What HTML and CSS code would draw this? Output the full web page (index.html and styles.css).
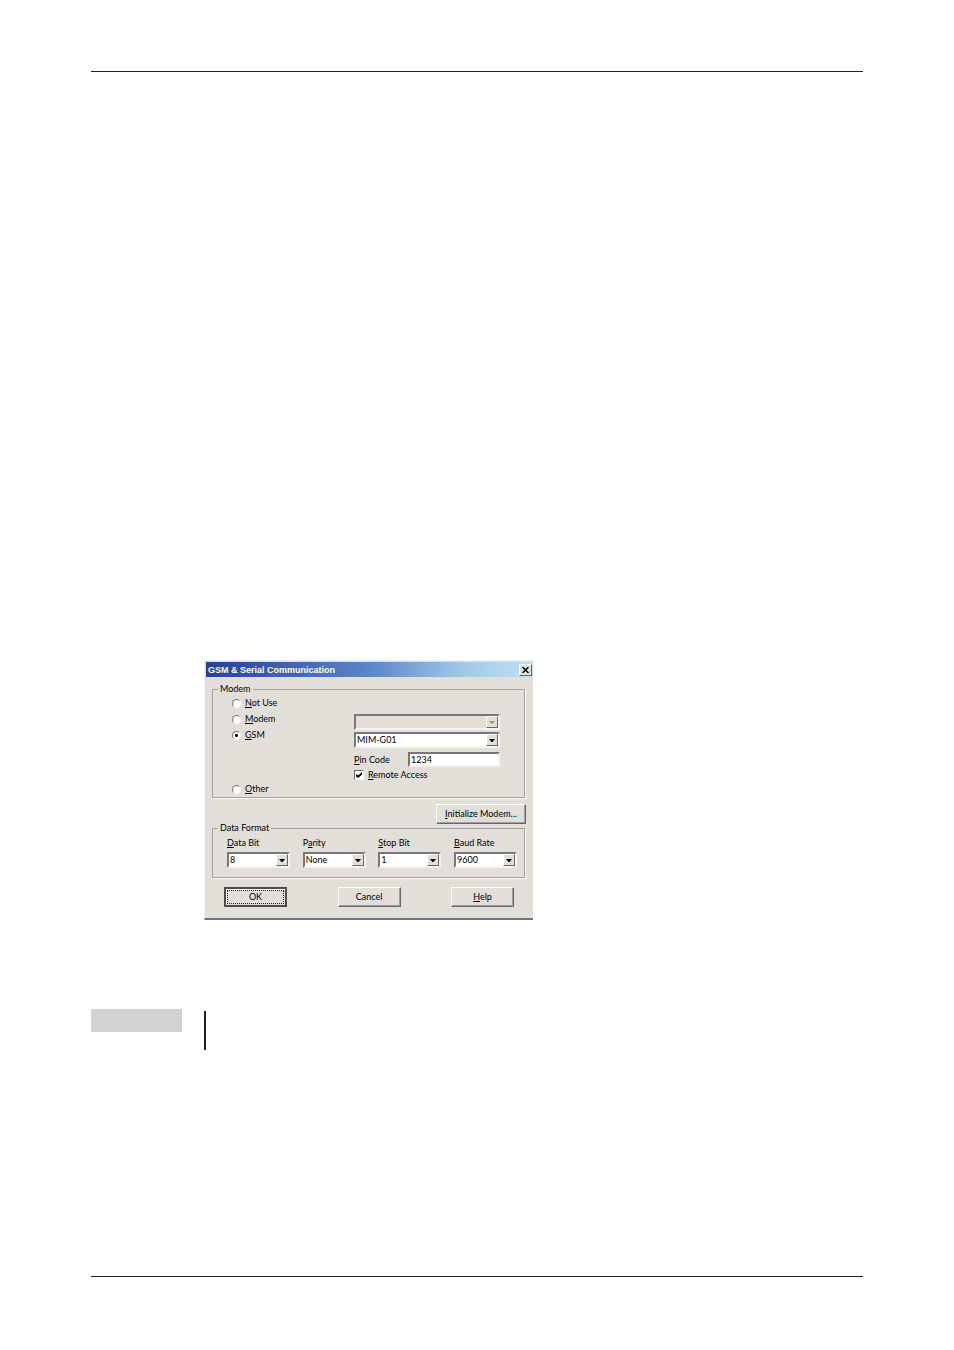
FILE: index.html
```
<!DOCTYPE html>
<html lang="en">
<head>
  <meta charset="UTF-8">
  <meta name="viewport" content="width=device-width, initial-scale=1.0">
  <title>GSM &amp; Serial Communication</title>
  <link rel="stylesheet" href="styles.css">
</head>
<body>
  <main class="page">
    <section class="row figure">
      <form class="dialog">
        <header class="titlebar">
          <h1>GSM &amp; Serial Communication</h1>
          <button type="button" class="close" aria-label="Close">
            <svg width="7" height="6" viewBox="0 0 7 6"><path d="M0.5 0L6.5 6M6.5 0L0.5 6" stroke="#000" stroke-width="1.5"/></svg>
          </button>
        </header>

        <div class="body">
          <fieldset class="modem">
            <legend>Modem</legend>
            <div class="modem-types">
              <label><input type="radio" name="modem"><span><u>N</u>ot Use</span></label>
              <label><input type="radio" name="modem"><span><u>M</u>odem</span></label>
              <label><input type="radio" name="modem" checked><span><u>G</u>SM</span></label>
              <label class="last"><input type="radio" name="modem"><span><u>O</u>ther</span></label>
            </div>
            <div class="modem-settings">
              <div class="combo disabled">
                <select aria-label="Modem type" disabled><option></option></select>
                <span class="arrow"><svg width="6" height="3" viewBox="0 0 6 3"><path d="M0 0H6L3.5 3H2.5Z"/></svg></span>
              </div>
              <div class="combo">
                <select aria-label="GSM type"><option>MIM-G01</option></select>
                <span class="arrow"><svg width="6" height="3" viewBox="0 0 6 3"><path d="M0 0H6L3.5 3H2.5Z"/></svg></span>
              </div>
              <div class="pin">
                <label for="pin"><u>P</u>in Code</label>
                <input type="text" id="pin" value="1234">
              </div>
              <label class="remote"><input type="checkbox" checked><span><u>R</u>emote Access</span></label>
            </div>
          </fieldset>

          <button type="button" class="btn init"><span><u>I</u>nitialize Modem...</span></button>

          <fieldset class="format">
            <legend>Data Format</legend>
            <div class="field">
              <label for="databit"><u>D</u>ata Bit</label>
              <div class="combo">
                <select id="databit"><option>8</option></select>
                <span class="arrow"><svg width="6" height="3" viewBox="0 0 6 3"><path d="M0 0H6L3.5 3H2.5Z"/></svg></span>
              </div>
            </div>
            <div class="field">
              <label for="parity">P<u>a</u>rity</label>
              <div class="combo">
                <select id="parity"><option>None</option></select>
                <span class="arrow"><svg width="6" height="3" viewBox="0 0 6 3"><path d="M0 0H6L3.5 3H2.5Z"/></svg></span>
              </div>
            </div>
            <div class="field">
              <label for="stopbit"><u>S</u>top Bit</label>
              <div class="combo">
                <select id="stopbit"><option>1</option></select>
                <span class="arrow"><svg width="6" height="3" viewBox="0 0 6 3"><path d="M0 0H6L3.5 3H2.5Z"/></svg></span>
              </div>
            </div>
            <div class="field">
              <label for="baud"><u>B</u>aud Rate</label>
              <div class="combo">
                <select id="baud"><option>9600</option></select>
                <span class="arrow"><svg width="6" height="3" viewBox="0 0 6 3"><path d="M0 0H6L3.5 3H2.5Z"/></svg></span>
              </div>
            </div>
          </fieldset>

          <div class="actions">
            <button type="button" class="btn default"><span>OK</span></button>
            <button type="button" class="btn"><span>Cancel</span></button>
            <button type="button" class="btn"><span><u>H</u>elp</span></button>
          </div>
        </div>
      </form>
    </section>

    <section class="row note">
      <div class="note-tag"></div>
      <div class="note-text"></div>
    </section>
  </main>
</body>
</html>
```
FILE: styles.css
```
* {
  box-sizing: border-box;
}

body {
  margin: 0;
  padding: 71px 91px 73px;
  min-height: 100vh;
  display: flex;
  background: #fff;
  color: #231f20;
}

.page {
  flex: 1;
  border-top: 1px solid #231f20;
  border-bottom: 1px solid #231f20;
}

.row {
  display: grid;
  grid-template-columns: 91px 1fr;
  column-gap: 22px;
}

.figure {
  margin-top: 588px;
}

.dialog {
  grid-column: 2;
  width: 329px;
  padding: 1px 0 0 1px;
  background: #e2dfd9;
  border: 1px solid #f1efea;
  border-right: 0;
  border-bottom: 2px solid #73737b;
}

.dialog,
.dialog button,
.dialog input,
.dialog select {
  font-family: Lato, "Liberation Sans", Arial, sans-serif;
  font-size: 9px;
  line-height: 12px;
  color: #000;
}

u {
  text-underline-offset: 1px;
}

.titlebar {
  display: flex;
  align-items: center;
  justify-content: space-between;
  height: 15px;
  padding: 0 1px 0 2px;
  background: linear-gradient(to right, #26409a, #5b86c8 50%, #a5cbe8 80%, #c0e0f2);
}

.titlebar h1 {
  margin: 0;
  font-family: "Liberation Sans", Arial, sans-serif;
  font-size: 9px;
  line-height: 12px;
  font-weight: bold;
  color: #fff;
}

.close {
  display: flex;
  align-items: center;
  justify-content: center;
  width: 13px;
  height: 12px;
  padding: 0;
  background: #e2dfd9;
  border: 1px solid;
  border-color: #fff #66666c #66666c #fff;
}

.body {
  display: flex;
  flex-direction: column;
  padding: 6px 8px 11px 6px;
}

fieldset {
  display: flex;
  min-width: 0;
  margin: 0;
  padding: 0;
  border: 1px solid #a3a3a5;
  box-shadow: 1px 1px 0 #f8f7f4;
}

legend {
  padding: 0 2px;
  height: 12px;
}

.modem {
  height: 115px;
  padding: 0 24px 0 19px;
  justify-content: space-between;
}

.modem legend {
  margin-left: -14px;
}

.modem-types {
  display: flex;
  flex-direction: column;
  height: 102px;
}

.modem-types label,
.remote {
  display: flex;
  align-items: center;
  gap: 4px;
  height: 16px;
}

.modem-types .last {
  margin-top: auto;
}

input[type="radio"] {
  appearance: none;
  width: 9px;
  height: 9px;
  margin: 0;
  border: 1px solid;
  border-color: #77777b #f6f5f2 #f6f5f2 #77777b;
  border-radius: 50%;
  background: #fff;
}

input[type="radio"]:checked {
  background: radial-gradient(circle, #000 0 1px, #fff 2px);
}

.modem-settings {
  width: 146px;
  padding-top: 19px;
}

.combo {
  position: relative;
  height: 16px;
  margin-bottom: 2px;
  background: #fff;
  border: 2px solid;
  border-color: #77777d #f4f3ef #f4f3ef #77777d;
}

.combo select {
  appearance: none;
  display: block;
  width: 100%;
  height: 12px;
  padding: 0 13px 0 1px;
  border: 0;
  border-radius: 0;
  background: none;
}

.combo .arrow {
  position: absolute;
  top: 0;
  right: 0;
  bottom: 0;
  display: flex;
  align-items: center;
  justify-content: center;
  width: 12px;
  background: #e2dfd9;
  border: 1px solid;
  border-color: #fff #66666c #66666c #fff;
  pointer-events: none;
}

.combo.disabled {
  background: #e2dfd9;
}

.combo.disabled path {
  fill: #98989a;
}

.pin {
  display: flex;
  align-items: center;
  justify-content: space-between;
  margin-top: 4px;
}

.pin input {
  width: 92px;
  height: 15px;
  padding: 0 1px;
  background: #fff;
  border: 2px solid;
  border-color: #77777d #f4f3ef #f4f3ef #77777d;
}

.remote input {
  appearance: none;
  width: 10px;
  height: 10px;
  margin: 0;
  border: 1px solid;
  border-color: #66666c #f4f3ef #f4f3ef #66666c;
  background: #fff;
}

.remote input:checked::before {
  content: "";
  display: block;
  width: 6px;
  height: 6px;
  margin: 1px;
  background: #000;
  clip-path: polygon(0 35%, 35% 60%, 100% 0, 100% 40%, 35% 100%, 0 75%);
}

.btn {
  width: 63px;
  height: 20px;
  padding: 0;
  background: #e2dfd9;
  border: 1px solid;
  border-color: #fff #66666c #66666c #fff;
  box-shadow: inset -1px -1px 0 #a0a0a4;
}

.init {
  align-self: flex-end;
  width: 90px;
  margin: 6px -1px 0 0;
}

.format {
  height: 56px;
  margin-top: -2px;
  padding: 2px 7px 0 14px;
  justify-content: space-between;
}

.format legend {
  margin-left: -9px;
}

.field {
  width: 63px;
}

.field label {
  display: block;
  height: 16px;
  line-height: 14px;
}

.actions {
  display: flex;
  justify-content: space-between;
  margin-top: 9px;
  padding: 0 11px 0 12px;
}

.default {
  padding: 1px;
  border: 2px solid #4b4b50;
  box-shadow: inset 1px 1px 0 #fff;
}

.default span {
  display: block;
  border: 1px dotted #222;
}

.note {
  margin-top: 89px;
}

.note-tag {
  height: 23px;
  background: #d2d2d2;
}

.note-text {
  height: 39px;
  margin-top: 2px;
  border-left: 2px solid #231f20;
}
```
